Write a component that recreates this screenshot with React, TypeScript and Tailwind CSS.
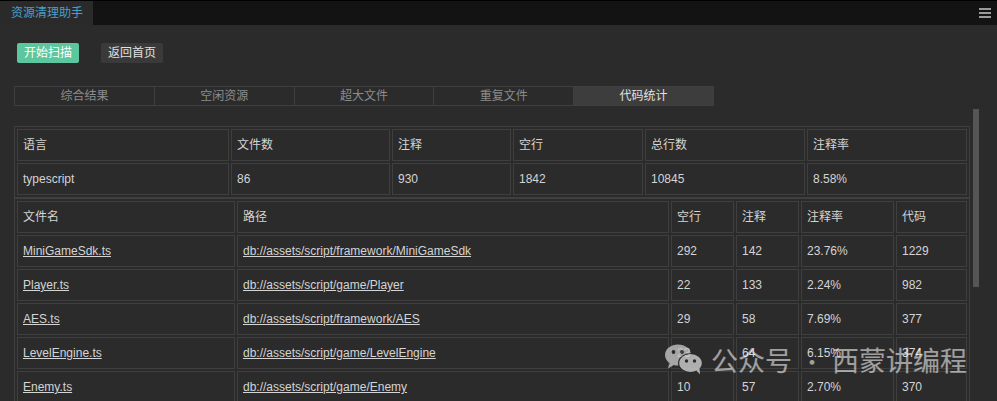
import React from 'react';

const summaryHead = ['语言', '文件数', '注释', '空行', '总行数', '注释率'];
const summaryWidths = ['w-[212px]', 'w-[159px]', 'w-[119px]', 'w-[130px]', 'w-[160px]', 'w-[160px]'];
const summaryRow = ['typescript', '86', '930', '1842', '10845', '8.58%'];

const fileHead = ['文件名', '路径', '空行', '注释', '注释率', '代码'];
const fileWidths = ['w-[218px]', 'w-[432px]', 'w-[63px]', 'w-[63px]', 'w-[93px]', 'w-[71px]'];

const files = [
  { name: 'MiniGameSdk.ts', path: 'db://assets/script/framework/MiniGameSdk', blank: 292, comment: 142, rate: '23.76%', code: 1229 },
  { name: 'Player.ts', path: 'db://assets/script/game/Player', blank: 22, comment: 133, rate: '2.24%', code: 982 },
  { name: 'AES.ts', path: 'db://assets/script/framework/AES', blank: 29, comment: 58, rate: '7.69%', code: 377 },
  { name: 'LevelEngine.ts', path: 'db://assets/script/game/LevelEngine', blank: 23, comment: 64, rate: '6.15%', code: 374 },
  { name: 'Enemy.ts', path: 'db://assets/script/game/Enemy', blank: 10, comment: 57, rate: '2.70%', code: 370 },
];

const tabs = ['综合结果', '空闲资源', '超大文件', '重复文件', '代码统计'];

const cell = 'border border-[#3f3f3f] h-[32px] px-[5px] py-0 text-left font-normal align-middle whitespace-nowrap';

const WeChatIcon = () => (
  <svg width="38" height="31" viewBox="0 0 38 31" className="opacity-80">
    <ellipse cx="13" cy="11" rx="13" ry="10.5" fill="#c4c4c4" />
    <path d="M5 18 L3 24.5 L10.5 20 Z" fill="#c4c4c4" />
    <circle cx="8.5" cy="8" r="1.9" fill="#2b2b2b" />
    <circle cx="17" cy="8" r="1.9" fill="#2b2b2b" />
    <ellipse cx="25.5" cy="19" rx="12.5" ry="10" fill="#2b2b2b" />
    <ellipse cx="25.5" cy="19" rx="11.3" ry="9" fill="#d0d0d0" />
    <path d="M31 26 L35 30.5 L34.5 24 Z" fill="#d0d0d0" />
    <circle cx="21.5" cy="17" r="1.7" fill="#2b2b2b" />
    <circle cx="29.5" cy="17" r="1.7" fill="#2b2b2b" />
  </svg>
);

export default function App() {
  return (
    <div
      className="relative w-[997px] h-[401px] overflow-hidden bg-[#2b2b2b] text-[12px] text-[#d4d4d4]"
      style={{ fontFamily: '"Liberation Sans", Arial, "Noto Sans CJK SC", sans-serif' }}
    >
      {/* 顶部标签栏 */}
      <div className="flex h-[25px] border-t border-black bg-[#131313]">
        <div className="flex w-[93px] items-center bg-[#2a2a2a] pl-[11px] text-[#4a9fc8]">资源清理助手</div>
        <div className="flex-1" />
        <div className="mr-[6px] mt-[7px] flex w-[12px] flex-col gap-[2px]">
          <span className="h-[2px] bg-[#9a9a9a]" />
          <span className="h-[2px] bg-[#9a9a9a]" />
          <span className="h-[2px] bg-[#9a9a9a]" />
        </div>
      </div>

      {/* 操作按钮 */}
      <div className="ml-[17px] mt-[18px] flex gap-[22px]">
        <button className="flex h-[20px] w-[62px] items-center justify-center rounded-[2px] bg-[#5cc69f] text-white">
          开始扫描
        </button>
        <button className="flex h-[20px] w-[62px] items-center justify-center rounded-[2px] bg-[#3a3a3a] text-[#e0e0e0]">
          返回首页
        </button>
      </div>

      {/* 页签 */}
      <div className="ml-[14px] mt-[23px] flex h-[20px] w-[700px] border border-[#3f3f3f]">
        {tabs.map((t, i) => (
          <div
            key={t}
            className={
              i === 4
                ? 'flex flex-1 items-center justify-center bg-[#3d3d3d] text-[#e2e2e2]'
                : 'flex flex-1 items-center justify-center border-r border-[#3f3f3f] text-[#8c8c8c]'
            }
          >
            {t}
          </div>
        ))}
      </div>

      {/* 统计内容 */}
      <div className="mt-[2px] flex">
        <div className="pl-[14px] pt-[18px]">
          <table className="w-[956px] table-fixed border-separate border-spacing-[2px] border border-[#3f3f3f]">
            <tbody>
              <tr>
                {summaryHead.map((h, i) => (
                  <th key={h} className={`${cell} ${summaryWidths[i]}`}>{h}</th>
                ))}
              </tr>
              <tr>
                {summaryRow.map((v, i) => (
                  <td key={i} className={cell}>{v}</td>
                ))}
              </tr>
            </tbody>
          </table>
          <table className="w-[956px] table-fixed border-separate border-spacing-[2px] border border-[#3f3f3f]">
            <tbody>
              <tr>
                {fileHead.map((h, i) => (
                  <th key={h} className={`${cell} ${fileWidths[i]}`}>{h}</th>
                ))}
              </tr>
              {files.map(f => (
                <tr key={f.name}>
                  <td className={cell}><span className="underline">{f.name}</span></td>
                  <td className={cell}><span className="underline">{f.path}</span></td>
                  <td className={cell}>{f.blank}</td>
                  <td className={cell}>{f.comment}</td>
                  <td className={cell}>{f.rate}</td>
                  <td className={cell}>{f.code}</td>
                </tr>
              ))}
            </tbody>
          </table>
        </div>
        <div className="ml-[3px] mt-[1px] h-[178px] w-[6px] bg-[#555555]" />
      </div>

      {/* 水印 */}
      <div
        className="absolute left-[665px] top-[344px] flex items-center text-[27px] leading-none text-white/55"
        style={{ fontFamily: '"Noto Sans CJK SC", sans-serif' }}
      >
        <WeChatIcon />
        <span className="ml-[8px]">公众号</span>
        <span className="mx-[9px] text-[22px]">·</span>
        <span>西蒙讲编程</span>
      </div>
    </div>
  );
}
